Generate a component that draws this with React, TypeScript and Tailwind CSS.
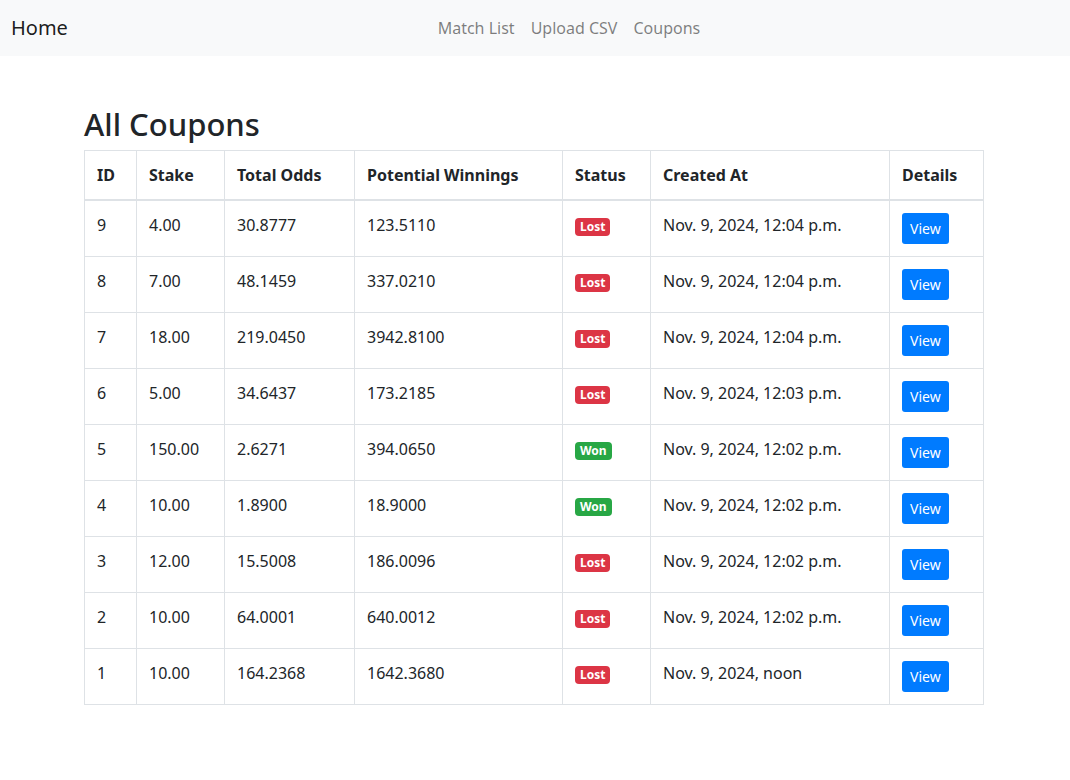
const coupons = [
  { id: 9, stake: "4.00", odds: "30.8777", win: "123.5110", won: false, at: "Nov. 9, 2024, 12:04 p.m." },
  { id: 8, stake: "7.00", odds: "48.1459", win: "337.0210", won: false, at: "Nov. 9, 2024, 12:04 p.m." },
  { id: 7, stake: "18.00", odds: "219.0450", win: "3942.8100", won: false, at: "Nov. 9, 2024, 12:04 p.m." },
  { id: 6, stake: "5.00", odds: "34.6437", win: "173.2185", won: false, at: "Nov. 9, 2024, 12:03 p.m." },
  { id: 5, stake: "150.00", odds: "2.6271", win: "394.0650", won: true, at: "Nov. 9, 2024, 12:02 p.m." },
  { id: 4, stake: "10.00", odds: "1.8900", win: "18.9000", won: true, at: "Nov. 9, 2024, 12:02 p.m." },
  { id: 3, stake: "12.00", odds: "15.5008", win: "186.0096", won: false, at: "Nov. 9, 2024, 12:02 p.m." },
  { id: 2, stake: "10.00", odds: "64.0001", win: "640.0012", won: false, at: "Nov. 9, 2024, 12:02 p.m." },
  { id: 1, stake: "10.00", odds: "164.2368", win: "1642.3680", won: false, at: "Nov. 9, 2024, noon" },
];

const cell = "border border-[#dee2e6] px-3 py-3 align-top";

export default function App() {
  return (
    <div className="min-h-[780px] bg-white text-[#212529] font-['Noto_Sans',sans-serif] text-base leading-6">
      <nav className="flex h-14 items-center bg-[#f8f9fa] pl-[11px] pr-4">
        <a className="mr-4 text-xl leading-[30px] text-black/90">Home</a>
        <ul className="mx-auto flex">
          <li><a className="block px-2 py-2 text-black/50">Match List</a></li>
          <li><a className="block px-2 py-2 text-black/50">Upload CSV</a></li>
          <li><a className="block px-2 py-2 text-black/50">Coupons</a></li>
        </ul>
      </nav>

      <div className="ml-[84px] mt-12 w-[900px]">
        <h2 className="mb-2 pt-[2px] text-[31px] font-medium leading-[36.4px]">All Coupons</h2>
        <table className="w-[899px] table-fixed border-collapse">
          <colgroup>
            <col className="w-[52px]" />
            <col className="w-[88px]" />
            <col className="w-[130px]" />
            <col className="w-[208px]" />
            <col className="w-[88px]" />
            <col className="w-[239px]" />
            <col className="w-[94px]" />
          </colgroup>
          <thead>
            <tr className="text-left">
              {["ID", "Stake", "Total Odds", "Potential Winnings", "Status", "Created At", "Details"].map((h) => (
                <th key={h} className={`${cell} border-b-2 font-bold`}>{h}</th>
              ))}
            </tr>
          </thead>
          <tbody>
            {coupons.map((c) => (
              <tr key={c.id}>
                <td className={cell}>{c.id}</td>
                <td className={cell}>{c.stake}</td>
                <td className={cell}>{c.odds}</td>
                <td className={cell}>{c.win}</td>
                <td className={cell}>
                  <span
                    className={`inline-block rounded-[4px] px-[5px] py-[3px] align-[0px] text-xs font-bold leading-none text-white ${
                      c.won ? "bg-[#28a745]" : "bg-[#dc3545]"
                    }`}
                  >
                    {c.won ? "Won" : "Lost"}
                  </span>
                </td>
                <td className={cell}>{c.at}</td>
                <td className={cell}>
                  <button className="h-[31px] rounded-[3px] bg-[#007bff] px-2 text-sm leading-[21px] text-white">
                    View
                  </button>
                </td>
              </tr>
            ))}
          </tbody>
        </table>
      </div>
    </div>
  );
}
